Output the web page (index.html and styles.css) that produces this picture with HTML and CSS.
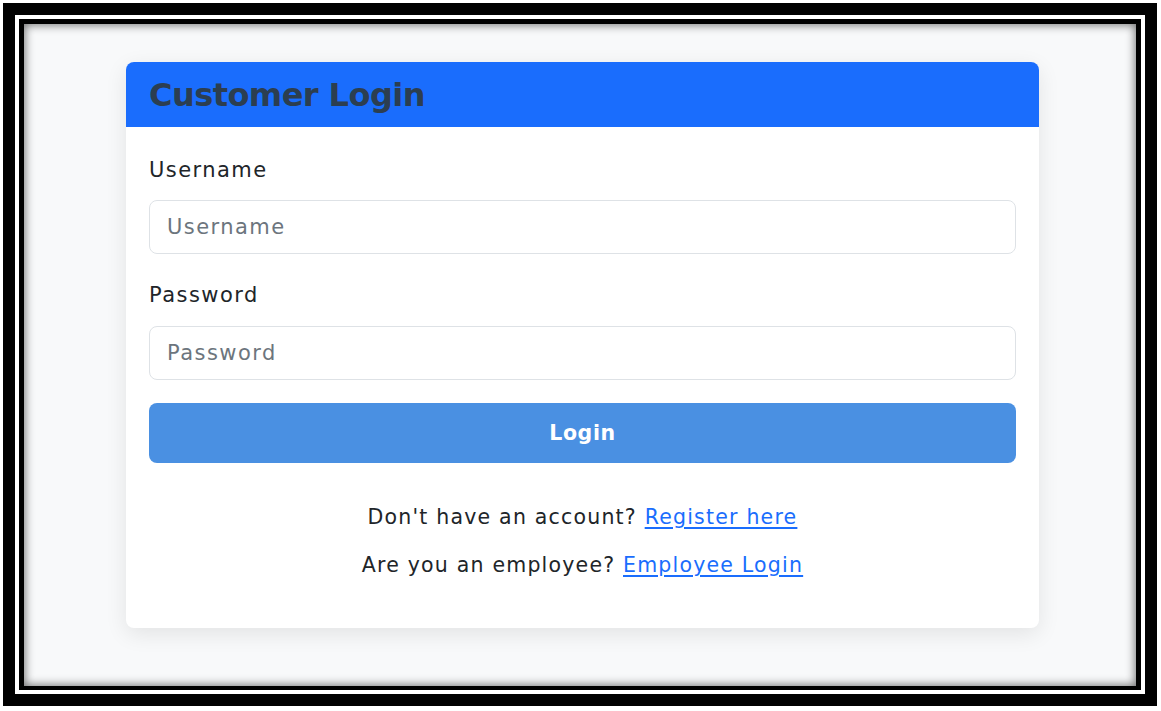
FILE: index.html
```html
<!DOCTYPE html>
<html lang="en">
<head>
<meta charset="utf-8">
<title>Customer Login</title>
<link rel="stylesheet" href="styles.css">
</head>
<body>
<div class="frame-outer">
  <div class="frame-inner">
    <main class="page">
      <section class="card">
        <header class="card-header">
          <h1 class="title">Customer Login</h1>
        </header>
        <form class="card-body">
          <label class="label" for="username">Username</label>
          <input class="input" id="username" type="text" placeholder="Username">
          <label class="label label-pw" for="password">Password</label>
          <input class="input" id="password" type="password" placeholder="Password">
          <button class="btn" type="button">Login</button>
          <div class="links">
            <p class="line">Don't have an account? <a href="#">Register here</a></p>
            <p class="line">Are you an employee? <a href="#">Employee Login</a></p>
          </div>
        </form>
      </section>
    </main>
  </div>
</div>
</body>
</html>
```

FILE: styles.css
```css
* { box-sizing: border-box; }
html, body { margin: 0; padding: 0; background: #fff; }
body {
  font-family: "DejaVu Sans", "Inter", sans-serif;
  color: #212529;
}
.frame-outer {
  margin: 3px 0 0 3px;
  width: 1154px;
  height: 703px;
  border: 12px solid #000;
  padding: 4px;
  background: #fff;
}
.frame-inner {
  width: 100%;
  height: 100%;
  border: 5px solid #000;
  border-bottom-width: 4px;
}
.page {
  width: 100%;
  height: 100%;
  background: #f8f9fa;
  box-shadow: inset 0 0 10px 1px rgba(0,0,0,0.55);
  padding: 38px 0 0 102px;
}
.card {
  width: 913px;
  height: 566px;
  background: #fff;
  border-radius: 8px;
  box-shadow: 0 6px 22px rgba(0,0,0,0.09);
  overflow: hidden;
}
.card-header {
  height: 65px;
  background: #1a6dfd;
  display: flex;
  align-items: center;
  padding: 0 23px;
}
.title {
  margin: 0;
  font-size: 32px;
  font-weight: 700;
  color: #2c3e50;
  letter-spacing: -0.55px;
}
.card-body {
  display: flex;
  flex-direction: column;
  padding: 28px 23px 0 23px;
}
.label {
  font-size: 21px;
  line-height: 30px;
  letter-spacing: 1.45px;
  color: #212529;
}
.label-pw { margin-top: 26px; }
.input {
  margin-top: 15px;
  height: 54px;
  border: 1px solid #dee2e6;
  border-radius: 8px;
  padding: 0 17px;
  font-family: inherit;
  font-size: 21px;
  letter-spacing: 1.45px;
  color: #212529;
  background: #fff;
  outline: none;
}
.input::placeholder { color: #6c757d; opacity: 1; }
#password { margin-top: 16px; }
.btn {
  margin-top: 23px;
  height: 60px;
  border: none;
  border-radius: 8px;
  background: #4a90e2;
  color: #fff;
  font-family: inherit;
  font-size: 20.5px;
  font-weight: 700;
  letter-spacing: 0.6px;
}
.links {
  margin-top: 38px;
  display: flex;
  flex-direction: column;
  gap: 16px;
  align-items: center;
}
.line {
  margin: 0;
  font-size: 20.5px;
  line-height: 32px;
  letter-spacing: 1.2px;
  color: #212529;
}
.line a { color: #1a6dfd; text-decoration: underline; text-underline-offset: 3px; }
```
